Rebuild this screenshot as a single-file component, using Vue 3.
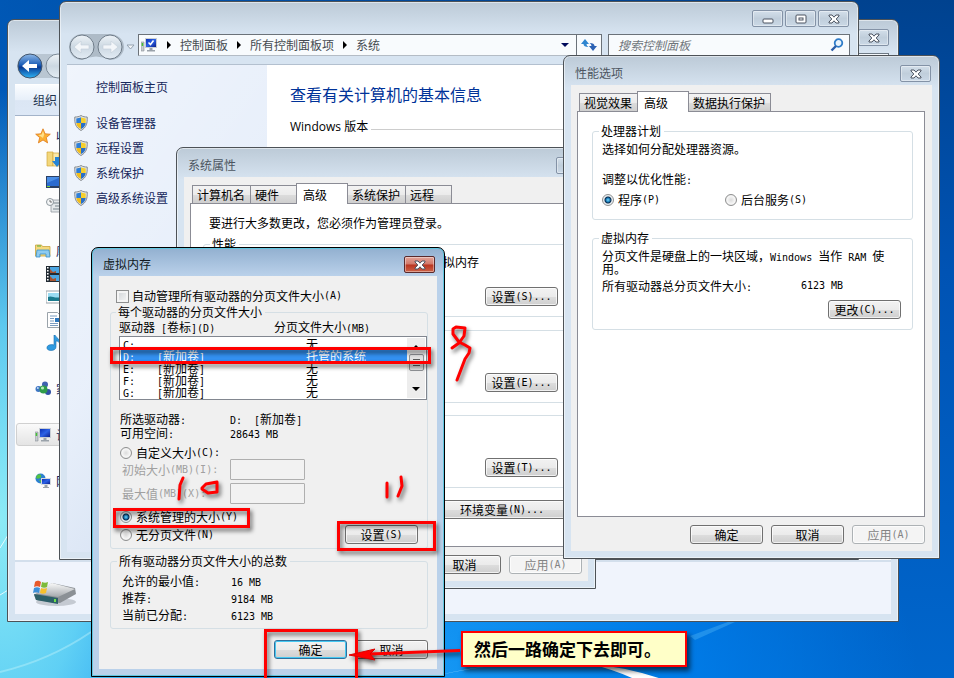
<template>
  <div class="desktop">
    <svg class="wallpaper" aria-hidden="true">
      <path d="M430 677Q520 655 600 667Q560 661 520 663Q480 666 430 677z" fill="#b9e6ff" opacity=".8" />
      <path d="M590 664Q640 668 690 690H655Q625 672 590 664z" fill="#fff" />
      <path d="M690 636L755 612L735 622L695 640z" fill="#5cc0f8" opacity=".35" />
      <path d="M0 595Q5 592 8 590M0 548Q5 540 8 535" fill="none" stroke="#fff" opacity=".8" />
      <path d="M0 672Q50 660 91 632" fill="none" stroke="#c8f6fb" stroke-width="2" opacity=".4" />
    </svg>
    <svg class="defs" width="0" height="0" aria-hidden="true">
      <defs>
        <linearGradient id="g-blue" x1="0" y1="0" x2="0" y2="1">
          <stop offset="0" stop-color="#8fb8e6" /><stop offset=".45" stop-color="#1d5fb8" />
          <stop offset=".55" stop-color="#083a94" /><stop offset="1" stop-color="#2fb4f5" />
        </linearGradient>
        <linearGradient id="g-off" x1="0" y1="0" x2="0" y2="1">
          <stop offset="0" stop-color="#eef3f7" /><stop offset=".5" stop-color="#ccd8e2" /><stop offset="1" stop-color="#e3ecf4" />
        </linearGradient>
        <linearGradient id="g-screen" x1="0" y1="0" x2="1" y2="1">
          <stop offset="0" stop-color="#0a2fb4" /><stop offset=".5" stop-color="#2c62e6" /><stop offset="1" stop-color="#0a1f8c" />
        </linearGradient>
        <linearGradient id="g-drive" x1="0" y1="0" x2="0" y2="1">
          <stop offset="0" stop-color="#fafafa" /><stop offset="1" stop-color="#a4a8ac" />
        </linearGradient>
      </defs>
      <symbol id="shield" viewBox="0 0 14 16">
        <path d="M7 .5C5 1.8 3 2 .8 2 .5 8 1.500 12.500 7 15.500 12.500 12.500 13.500 8 13.200 2 11 2 9 1.800 7 .5z" fill="#dfe3e6" stroke="#868b90" />
        <path d="M7 2.200C5.500 3 4 3.300 2.300 3.400V8H7z" fill="#2f7fd6" /><path d="M7 2.200c1.500.8 3 1.100 4.700 1.200V8H7z" fill="#f6cf2c" />
        <path d="M2.300 8c.3 2.700 1.700 4.600 4.700 6.100V8z" fill="#f2bd1a" /><path d="M11.700 8c-.3 2.700-1.700 4.600-4.700 6.100V8z" fill="#2a6fc6" />
      </symbol>
      <symbol id="computer" viewBox="0 0 16 16">
        <path d="M0 5h3v9H0z" fill="#c6cbd0" stroke="#878d93" stroke-width=".6" /><path d="M.7 6h1.500v3H.7z" fill="#45c234" />
        <path d="M4 1h12v10H4z" fill="#c9ced4" /><path d="M5 2h10v8H5z" fill="url(#g-screen)" />
        <path d="M8.500 11h3v2h2.500v1.500H6V13h2.500z" fill="#9aa2aa" />
      </symbol>
      <symbol id="star" viewBox="0 0 16 16">
        <path d="M8 .8l2.100 5 5.200.4-4 3.400 1.300 5.300L8 12l-4.600 2.900 1.300-5.300-4-3.400 5.200-.4z" fill="#fbb034" stroke="#e07b1c" stroke-width=".8" />
        <path d="M8 3l1.200 3.600L8 10 3.500 7l3.200-.6z" fill="#ffe08a" />
      </symbol>
      <symbol id="download" viewBox="0 0 16 16">
        <path d="M1 1h6v14H1z" fill="#f3d77b" stroke="#d1a63a" stroke-width=".7" /><path d="M7 2h6v13H7z" fill="#fbe9a8" stroke="#d1a63a" stroke-width=".7" />
        <path d="M9 6h4v4h3l-5 6-5-6h3z" fill="#2484d6" />
      </symbol>
      <symbol id="screen" viewBox="0 0 16 16">
        <path d="M0 2h16v12H0z" fill="#2a3f64" /><path d="M1 3h14v9H1z" fill="#2b6bd0" /><path d="M1 3h14L1 9z" fill="#4a8ee6" />
        <path d="M1 12h3v1H1z" fill="#7ad13a" />
      </symbol>
      <symbol id="recent" viewBox="0 0 16 16">
        <path d="M5 3h11v12H5z" fill="#e4e8ea" stroke="#8f989e" stroke-width=".8" /><path d="M7 6h7M9 9h6M7 12h7" stroke="#76838b" />
        <circle cx="4" cy="5" r="3.500" fill="#f4f6f7" stroke="#8f989e" /><path d="M4 3v2h2" fill="none" stroke="#555" stroke-width=".8" />
      </symbol>
      <symbol id="library" viewBox="0 0 16 16">
        <path d="M.5 2h6l1 1.500H15V13H.5z" fill="#f5d97c" stroke="#c9a33e" stroke-width=".8" /><path d="M2 3h4" stroke="#54b13e" />
        <path d="M2 7h12l1 7h-4v-3H5v3H1z" fill="#8ecbf0" stroke="#3b91c9" stroke-width=".8" />
      </symbol>
      <symbol id="video" viewBox="0 0 16 16">
        <path d="M0 0h16v16H0z" fill="#222b33" /><path d="M4 1h11v6H4zM4 9h11v6H4z" fill="#4ba6e2" /><path d="M4 3l3 3 3-1v2H4zM4 10l3 3 3-1v3H4z" fill="#a8532f" />
        <path d="M1.800 1v14" stroke="#fff" stroke-width="1.600" stroke-dasharray="1.500 1.500" />
      </symbol>
      <symbol id="picture" viewBox="0 0 16 16">
        <path d="M0 2h16v12H0z" fill="#fff" stroke="#9aa3aa" /><path d="M2 4h13v8H2z" fill="#9bdcf2" /><path d="M2 8c4-2 6 2 13 0v4H2z" fill="#1b7b8e" />
      </symbol>
      <symbol id="doc" viewBox="0 0 16 16">
        <path d="M1.500.5h10l3 3v12h-13z" fill="#fff" stroke="#9aa3aa" /><path d="M4 4h7M4 6.500h4M4 9h4M4 11.500h8M4 13.500h8" stroke="#7a9cc0" /><path d="M9 6h4v4H9z" fill="#2b77be" />
      </symbol>
      <symbol id="music" viewBox="0 0 16 16">
        <path d="M9 0c1 3 6 4 5 9-1-2-2-3-4-3v6c0 2-2 3.500-5 3.500S.5 14 1 12s4-3 7-2V0z" fill="#2f9be0" stroke="#1b6fb0" stroke-width=".6" />
      </symbol>
      <symbol id="homegroup" viewBox="0 0 16 16">
        <circle cx="3.500" cy="8" r="3" fill="#3f76c4" /><circle cx="10" cy="3.500" r="3" fill="#3f62b0" /><circle cx="13" cy="11" r="3" fill="#2f50a4" />
        <circle cx="8.500" cy="8.500" r="4" fill="#2f9c4a" /><circle cx="7.500" cy="7" r="1.600" fill="#b4ecb8" /><circle cx="2.800" cy="7" r="1" fill="#c6dcf6" />
      </symbol>
      <symbol id="network" viewBox="0 0 16 16">
        <circle cx="5.500" cy="5.500" r="5" fill="#2c7fd0" /><path d="M2 2c3-2 5 0 4 2S2 6 1 5zM4 7c3 0 4 1 2 3z" fill="#53c244" />
        <path d="M6 5h10v7H6z" fill="#d4d9de" /><path d="M7 6h8v5H7z" fill="url(#g-screen)" /><path d="M9.500 12h3v2H14v1H8v-1h1.500z" fill="#9aa2aa" />
      </symbol>
      <symbol id="cross" viewBox="0 0 12 10">
        <path d="M1 1h3l2 2.200L8 1h3v1L8.200 5 11 8v1H8L6 6.800 4 9H1V8l2.800-3L1 2z" fill="#fff" stroke="#4b5360" stroke-linejoin="round" />
      </symbol>
    </svg>

    <!-- explorer -->
    <section class="win explorer">
      <header class="explorer-top">
        <div class="caption"><button class="cap" aria-label="关闭"><svg width="12" height="10"><use href="#cross" /></svg></button></div>
      </header>
      <div class="explorer-nav">
        <svg width="58" height="28">
          <rect x="1" y="1" width="56" height="24" rx="12" fill="#b9c6d2" />
          <circle cx="14" cy="13" r="12" fill="url(#g-blue)" stroke="#42566e" />
          <path d="M6 13l7-6v4h8v4h-8v4z" fill="#fff" />
          <circle cx="42" cy="13" r="12" fill="url(#g-off)" stroke="#7c8a98" />
        </svg>
        <span class="explorer-search"></span>
      </div>
      <div class="toolbar">组织</div>
      <nav class="tree">
        <ul v-for="(g, i) in tree" :key="i">
          <li v-for="n in g" :key="n.icon" :class="{ child: n.child, current: n.current }">
            <svg width="16" height="16"><use :href="'#' + n.icon" /></svg><span>{{ n.label }}</span>
          </li>
        </ul>
      </nav>
      <footer class="details">
        <svg width="46" height="28" viewBox="0 0 46 28">
          <ellipse cx="24" cy="23" rx="20" ry="4" fill="#c5cad2" />
          <path d="M2 16L20 4l23 5 1 6-16 9-24-3z" fill="#8b9095" />
          <path d="M2 14L20 4l23 6-17 8z" fill="url(#g-drive)" />
          <path d="M2 15l24 4v6L4 21z" fill="#2d5f68" /><path d="M22 20h2v3h-2z" fill="#6ee04a" />
          <path d="M3 3c3-2 4-1 6 0l-1 5c-2-1-4-1-6 0z" fill="#e8592b" /><path d="M10 3c2 1 4 1 6 0l-1 5c-2 1-4 1-6 0z" fill="#7dbb3a" />
          <path d="M2 9c2-1 4-1 6 0l-1 5c-2-1-4-1-6 0z" fill="#3c8fd8" /><path d="M9 9c2 1 4 1 6 0l-1 5c-2 1-4 1-6 0z" fill="#f6c02c" />
        </svg>
      </footer>
    </section>

    <!-- control panel -->
    <section class="win panel">
      <header class="panel-top">
        <div class="caption">
          <button class="cap" aria-label="最小化"><svg width="12" height="10"><rect x="1" y="5" width="10" height="4" rx="1" fill="#fff" stroke="#4b5360" /></svg></button>
          <button class="cap" aria-label="最大化"><svg width="12" height="10"><rect x="1" y="1" width="10" height="8" rx="1" fill="#fff" stroke="#4b5360" /><rect x="4" y="4" width="4" height="2" fill="#fff" stroke="#4b5360" /></svg></button>
          <button class="cap" aria-label="关闭"><svg width="12" height="10"><use href="#cross" /></svg></button>
        </div>
      </header>
      <div class="panel-nav">
        <svg class="arrows" width="70" height="28">
          <path d="M15 0h28a14 13 0 0 1 0 26q-14-7-28 0a13 13 0 0 1 0-26z" fill="#aebbc7" />
          <g fill="url(#g-off)" stroke="#6f7c89"><circle cx="15" cy="13" r="12" /><circle cx="43" cy="13" r="12" /></g>
          <path d="M7 13l7-6v4h8v4h-8v4zM51 13l-7-6v4h-8v4h8v4z" fill="#f3f6f9" stroke="#c3ced8" stroke-width=".6" />
          <path d="M60 11h7l-3.500 4z" fill="#f5f8fb" stroke="#93a1af" />
        </svg>
        <div class="address">
          <svg width="16" height="16"><use href="#computer" /><path d="M7.500 5.500l2 2 3-4" fill="none" stroke="#fff" stroke-width="1.500" /></svg>
          <template v-for="c in crumbs" :key="c">
            <svg class="sep" width="4" height="8"><path d="M0 0l4 4-4 4z" /></svg>
            <a href="#">{{ c }}</a>
          </template>
          <svg class="drop" width="8" height="4"><path d="M0 0h8L4 4z" fill="#000a5c" /></svg>
          <button class="refresh" aria-label="刷新">
            <svg width="16" height="14"><path d="M0 6l4-5 4 5H5.500q0 2 2 3Q2.500 9 2.500 6z" fill="#2f86d0" /><path d="M16 8l-4 5-4-5h2.500q0-2-2-3 5 0 5 3z" fill="#2b62b4" /></svg>
          </button>
        </div>
        <div class="search">
          <input type="text" placeholder="搜索控制面板" aria-label="搜索控制面板" />
          <svg width="14" height="14"><circle cx="8.500" cy="5" r="3.800" fill="#eaf4fc" stroke="#2f7cc8" stroke-width="1.800" /><path d="M6 8l-4.500 4.500" stroke="#2b5ea8" stroke-width="2.400" /></svg>
        </div>
      </div>
      <div class="panel-body">
        <aside>
          <a class="home" href="#">控制面板主页</a>
          <a v-for="t in tasks" :key="t" class="task" href="#"><svg width="14" height="16"><use href="#shield" /></svg>{{ t }}</a>
        </aside>
        <main>
          <h1>查看有关计算机的基本信息</h1>
          <h2>Windows 版本</h2>
        </main>
      </div>
    </section>

    <!-- system properties -->
    <section class="win dialog system">
      <header class="title">
        <span>系统属性</span>
        <button class="cap" aria-label="关闭"><svg width="12" height="10"><use href="#cross" /></svg></button>
      </header>
      <div class="client">
        <div class="tabs">
          <button>计算机名</button><button class="wide">硬件</button><button class="on">高级</button><button>系统保护</button><button class="wide">远程</button>
        </div>
        <div class="page">
          <p class="note">要进行大多数更改，您必须作为管理员登录。</p>
          <fieldset class="perf">
            <legend>性能</legend>
            <p>视觉效果，处理器计划，内存使用，以及虚拟内存</p>
            <button class="btn">设置<i>(S)...</i></button>
          </fieldset>
          <fieldset class="bare"><button class="btn">设置<i>(E)...</i></button></fieldset>
          <fieldset class="bare"><button class="btn">设置<i>(T)...</i></button></fieldset>
          <button class="btn env">环境变量<i>(N)...</i></button>
        </div>
        <div class="actions">
          <button class="btn">取消</button>
          <button class="btn" disabled>应用<i>(A)</i></button>
        </div>
      </div>
    </section>

    <!-- performance options -->
    <section class="win dialog options">
      <header class="title">
        <span>性能选项</span>
        <button class="cap" aria-label="关闭"><svg width="12" height="10"><use href="#cross" /></svg></button>
      </header>
      <div class="client">
        <div class="tabs">
          <button>视觉效果</button><button class="on">高级</button><button>数据执行保护</button>
        </div>
        <div class="page">
          <fieldset class="sched">
            <legend>处理器计划</legend>
            <p>选择如何分配处理器资源。</p>
            <p class="adjust">调整以优化性能<i>:</i></p>
            <div class="radios">
              <label><input v-model="schedule" type="radio" value="P" />程序<i>(P)</i></label>
              <label><input v-model="schedule" type="radio" value="S" />后台服务<i>(S)</i></label>
            </div>
          </fieldset>
          <fieldset class="vmem">
            <legend>虚拟内存</legend>
            <p class="explain">分页文件是硬盘上的一块区域，<i>Windows </i>当作<i> RAM </i>使<br />用。</p>
            <p class="total"><span>所有驱动器总分页文件大小<i>:</i></span><i>6123 MB</i></p>
            <button class="btn">更改<i>(C)...</i></button>
          </fieldset>
        </div>
        <div class="actions">
          <button class="btn">确定</button>
          <button class="btn">取消</button>
          <button class="btn" disabled>应用<i>(A)</i></button>
        </div>
      </div>
    </section>

    <!-- virtual memory -->
    <section class="win dialog memory">
      <header class="title">
        <span>虚拟内存</span>
        <button class="cap red" aria-label="关闭"><svg width="12" height="10"><use href="#cross" /></svg></button>
      </header>
      <div class="client">
        <label class="auto"><input v-model="auto" type="checkbox" />自动管理所有驱动器的分页文件大小<i>(A)</i></label>
        <fieldset class="drives">
          <legend>每个驱动器的分页文件大小</legend>
          <div class="heads"><span>驱动器<i> [</i>卷标<i>](D)</i></span><span>分页文件大小<i>(MB)</i></span></div>
          <div class="list">
            <table>
              <tbody>
                <tr v-for="d in drives" :key="d.id" :class="{ sel: d.id === picked }" @click="picked = d.id">
                  <td><i>{{ d.id }}:</i></td>
                  <td><template v-if="d.label"><i>[</i>{{ d.label }}<i>]</i></template></td>
                  <td>{{ d.size }}</td>
                </tr>
              </tbody>
            </table>
            <div class="scroll">
              <svg width="8" height="4"><path d="M0 4l4-4 4 4z" /></svg>
              <span class="thumb"></span>
              <svg width="8" height="4"><path d="M0 0h8L4 4z" /></svg>
            </div>
          </div>
          <dl class="info">
            <dt>所选驱动器<i>:</i></dt><dd><i>D:&nbsp; [</i>新加卷<i>]</i></dd>
            <dt>可用空间<i>:</i></dt><dd><i>28643 MB</i></dd>
          </dl>
          <label class="custom"><input v-model="mode" type="radio" value="C" />自定义大小<i>(C):</i></label>
          <div class="size"><label for="min">初始大小<i>(MB)(I):</i></label><input id="min" type="text" disabled /></div>
          <div class="size"><label for="max">最大值<i>(MB)(X):</i></label><input id="max" type="text" disabled /></div>
          <div class="modes">
            <div>
              <label><input v-model="mode" type="radio" value="Y" />系统管理的大小<i>(Y)</i></label>
              <label><input v-model="mode" type="radio" value="N" />无分页文件<i>(N)</i></label>
            </div>
            <button class="btn">设置<i>(S)</i></button>
          </div>
        </fieldset>
        <fieldset class="totals">
          <legend>所有驱动器分页文件大小的总数</legend>
          <dl>
            <template v-for="t in totals" :key="t[0]"><dt>{{ t[0] }}<i>:</i></dt><dd><i>{{ t[1] }}</i></dd></template>
          </dl>
        </fieldset>
        <div class="actions">
          <button class="btn default">确定</button>
          <button class="btn">取消</button>
        </div>
      </div>
    </section>

    <svg class="marks" aria-hidden="true">
      <g fill="none" stroke="#f00" stroke-width="3">
        <rect x="111.500" y="348.500" width="318" height="14" />
        <rect x="114.500" y="509.500" width="134" height="17" />
        <rect x="338.500" y="522.500" width="96" height="27" />
        <rect x="265.500" y="630.500" width="91" height="60" />
      </g>
      <g fill="none" stroke="#f00" stroke-width="3" stroke-linecap="round" stroke-linejoin="round">
        <path d="M452 348l7-5 5-7 1-8-9-1-3 2v5l6 8 6 3 5 3-1 5-4 6-8 21" />
        <path d="M183 478l-3 7-1 14" /><path d="M202 488l4-4 11-2v10l-9 1-6-4z" />
        <path d="M387 483v14M401 477l1 9-4 10" />
      </g>
      <path d="M460 650.500L370 654" stroke="#f00" stroke-width="3" />
      <path d="M349 655l26-6-5 5 5 6z" fill="#f00" stroke="#d00" />
    </svg>
    <div class="callout">然后一路确定下去即可。</div>
  </div>
</template>

<script setup>
import { ref } from 'vue'

const schedule = ref('P')
const auto = ref(false)
const mode = ref('Y')
const picked = ref('D')

const crumbs = ['控制面板', '所有控制面板项', '系统']
const tasks = ['设备管理器', '远程设置', '系统保护', '高级系统设置']
const tree = [
  [
    { icon: 'star', label: '收藏夹' },
    { icon: 'download', label: '下载', child: true },
    { icon: 'screen', label: '桌面', child: true },
    { icon: 'recent', label: '最近访问的位置', child: true },
  ],
  [
    { icon: 'library', label: '库' },
    { icon: 'video', label: '视频', child: true },
    { icon: 'picture', label: '图片', child: true },
    { icon: 'doc', label: '文档', child: true },
    { icon: 'music', label: '音乐', child: true },
  ],
  [{ icon: 'homegroup', label: '家庭组' }],
  [{ icon: 'computer', label: '计算机', current: true }],
  [{ icon: 'network', label: '网络' }],
]
const drives = [
  { id: 'C', label: '', size: '无' },
  { id: 'D', label: '新加卷', size: '托管的系统' },
  { id: 'E', label: '新加卷', size: '无' },
  { id: 'F', label: '新加卷', size: '无' },
  { id: 'G', label: '新加卷', size: '无' },
]
const totals = [
  ['允许的最小值', '16 MB'],
  ['推荐', '9184 MB'],
  ['当前已分配', '6123 MB'],
]
</script>

<style>
body{margin:0;overflow:hidden}
</style>

<style scoped>
*{box-sizing:border-box}
.desktop{position:relative;height:100vh;overflow:hidden;font:12px/14px "Noto Sans CJK SC",sans-serif;color:#000;
  background:
    radial-gradient(ellipse 200px 430px at 0 520px,#8cebf6 0,rgba(110,220,246,.85) 45%,rgba(50,170,236,0) 100%),
    radial-gradient(ellipse 620px 420px at 300px 700px,#22a8fa 0,rgba(0,130,240,.8) 60%,rgba(0,110,220,0) 100%),
    linear-gradient(90deg,rgba(0,96,196,.7),rgba(0,60,140,0) 60%),
    linear-gradient(180deg,#00428f 0,#0053b4 40%,#0066cc 100%)}
.wallpaper{position:absolute;inset:0;width:100%;height:100%}
.defs{position:absolute}
svg{display:block;flex:none}
p,h1,h2,dl,dd,ul{margin:0;padding:0}
i{font:10px/1 "DejaVu Sans Mono",monospace;white-space:pre}
button,input{font:inherit;color:inherit;margin:0;padding:0}
a{color:inherit;text-decoration:none}
label{display:flex;align-items:center;white-space:nowrap}

/* windows */
.win{position:absolute;display:flex;flex-direction:column;padding:0 7px 7px;border:1px solid #4d5257;border-radius:7px 7px 0 0;background:linear-gradient(#bccad7 0,#d7e4f1 32px,#d7e4f1);box-shadow:inset 0 0 0 1px rgba(255,255,255,.5)}
.caption{display:flex;gap:2px;justify-content:flex-end}
.cap{width:31px;height:17px;display:flex;align-items:center;justify-content:center;border:1px solid #8392a6;border-radius:2px;background:linear-gradient(#d3dfea,#c0cedb 50%,#cad8e6);box-shadow:inset 0 0 0 1px rgba(255,255,255,.4)}
.cap.red{border-color:#5a2a2c;background:linear-gradient(#e3a398,#d17869 48%,#b93420 52%,#cc6248)}

.explorer{left:7px;top:19px;width:892px;height:603px}
.explorer-top{height:33px;padding:9px 2px 0}
.explorer-nav{height:31px;display:flex;padding-left:1px}
.explorer-search{flex:1;margin:0 2px 0 400px;height:22px;border:1px solid #6d7883;background:#f4f8fc}
.toolbar{height:32px;padding-left:18px;line-height:30px;color:#1e3450;border-top:1px solid #fff;border-bottom:1px solid #a3b3c9;background:linear-gradient(#fbfdff,#e7eff9 50%,#dbe6f4 52%,#dde8f6)}
.tree{flex:1;background:#fdfdfd;padding-top:8px;display:flex;flex-direction:column;gap:23px}
.tree ul{width:56px;overflow:hidden;list-style:none}
.tree li{height:23px;display:flex;align-items:center;gap:5px;padding-left:19px;border:1px solid transparent;color:#10205a;white-space:nowrap}
.tree li.child{padding-left:30px}
.tree li.current{margin-left:1px;padding-left:18px;border-color:#d0d0d0;border-radius:3px;background:linear-gradient(#fafafa,#e4e4e4)}
.details{height:54px;padding:17px 0 0 17px;background:#f0f4fc;border-top:2px solid #d3dfec}

.panel{left:59px;top:1px;width:800px;height:559px}
.panel-top{height:32px;padding:8px 2px 0}
.panel-nav{height:31px;display:flex;align-items:flex-start;padding-right:1px;border-bottom:1px solid #b3c0cf}
.arrows{margin-right:1px}
.address{flex:1;height:22px;display:flex;align-items:center;gap:9px;padding-left:2px;border:1px solid #6b7279;border-bottom-color:#b4bcc5;background:#f8fbfd;color:#454b51}
.address svg:first-child{margin-right:1px}
.address .drop{margin-left:auto}
.refresh{align-self:stretch;width:25px;margin-left:-2px;display:flex;align-items:center;justify-content:center;border:0;border-left:1px solid #6b7279;background:none}
.search{width:242px;height:22px;margin-left:6px;display:flex;align-items:center;padding:0 5px 0 9px;border:1px solid #6b7279;border-bottom-color:#b4bcc5;background:#f8fbfd}
.search input{flex:1;min-width:0;border:0;background:none;font-style:italic}
.search input::placeholder{color:#6f757b;opacity:1}
.panel-body{flex:1;display:flex}
aside{width:200px;padding:10px 7px;color:#15265a;background:linear-gradient(125deg,rgba(255,255,255,.4) 0,rgba(255,255,255,.1) 45%,rgba(190,208,232,.35) 75%,rgba(255,255,255,.1)),#e6eefa}
aside a{display:flex;align-items:center}
.home{height:24px;padding-left:22px;margin-bottom:11px}
.task{height:25px;gap:8px}
main{flex:1;padding:17px 0 0 23px;background:#fff}
h1{font-size:16px;line-height:24px;font-weight:400;color:#003399}
h2{margin-top:13px;display:flex;align-items:center;gap:3px;font:12px/16px "Open Sans","Noto Sans CJK SC",sans-serif}
h2::after{content:"";flex:1;border-top:1px solid #cdcdcd;margin-top:4px}

/* dialogs */
.title{display:flex;justify-content:space-between;height:29px;padding:9px 1px 0 4px;color:#4c5560;line-height:16px}
.client{flex:1;padding:6px 6px 0;background:#f0f0f0}
.tabs{height:20px;padding-left:2px;display:flex;align-items:flex-end}
.tabs button{height:18px;padding:0 5px 0 4px;border:1px solid #8b8c95;border-bottom:0;background:linear-gradient(#f3f3f3,#ebebeb 50%,#dcdcdc 52%,#cfcfcf);line-height:17px;text-align:left}
.tabs button + button{margin-left:-1px}
.tabs .wide{width:47px}
.tabs .on{position:relative;width:52px;height:21px;margin-bottom:-1px;padding-left:6px;background:#fff}
.page{border:1px solid #8b8c95;background:#fff}
.actions{display:flex;justify-content:flex-end;gap:8px;margin-top:8px}
.btn{display:flex;align-items:center;justify-content:center;width:73px;height:19px;border:1px solid #707070;border-radius:3px;background:linear-gradient(#f2f2f2,#ebebeb 50%,#dddddd 52%,#cfcfcf);box-shadow:inset 0 0 0 1px rgba(255,255,255,.7)}
.btn:disabled{color:#838383;border-color:#adb2b5;background:#f4f4f4}
.btn.default{border-color:#2f6f9c;box-shadow:inset 0 0 0 1px #45c8f2}
fieldset{min-width:0;margin:0;border:1px solid #d5dfe5;border-radius:3px;padding:0 0 0 9px}
legend{margin-left:-3px;padding:0 3px 0 2px;height:14px;line-height:14px}
input[type=radio]{appearance:none;width:12px;height:12px;margin-right:4px;border:1px solid #8e8f8f;border-radius:50%;background:radial-gradient(#dcdcdc 0,#f6f6f6 4px,#e2e2e2 6px)}
input[type=radio]:checked{background:radial-gradient(circle at 50% 50%,#7fdcff 0,#1478b4 2px,#0b2a4a 3px,#e9eef2 4px)}
input[type=checkbox]{appearance:none;width:13px;height:13px;margin-right:3px;border:1px solid #8e8f8f;background:linear-gradient(135deg,#cfd3d6,#f7f7f7);box-shadow:inset 0 0 0 2px #f4f4f4}

.system{left:176px;top:147px;width:420px;height:442px}
.system .page{height:344px;padding:12px 9px 0 12px}
.system .note{padding-left:6px}
.system fieldset{display:flow-root;padding-right:13px;padding-bottom:10px}
.perf{margin-top:7px}
.perf p{padding:4px 0 0 2px;white-space:nowrap}
.system fieldset .btn{margin-left:auto}
.perf .btn{margin-top:18px}
.system .bare{margin-top:13px;padding-top:42px}
.system .bare + .bare{margin-top:12px}
.env{width:140px;margin:12px 0 0 auto}

.options{left:563px;top:55px;width:377px;height:504px}
.options .client{padding-right:7px}
.options .page{height:406px;padding:12px 11px 0 14px}
.sched{padding-top:4px;padding-bottom:12px}
.adjust{margin-top:16px}
.radios{display:grid;grid-template-columns:123px 1fr;margin-top:7px}
.vmem{margin-top:11px;padding-top:5px;padding-bottom:10px}
.explain{line-height:12px;white-space:nowrap}
.total{display:grid;grid-template-columns:199px 1fr;align-items:center;margin-top:4px}
.vmem .btn{margin:7px 11px 0 auto}

.memory{left:91px;top:247px;width:354px;height:430px;border-color:#000;background:linear-gradient(#92b0d0 0,#bad1ea 28px,#bad1ea);box-shadow:inset 0 0 0 1px #5fc6e0}
.memory .title{height:28px;padding:8px 2px 0 4px;color:#101820}
.memory .client{padding:13px 9px 0 11px}
.auto{height:14px;margin-left:6px}
.drives{margin-top:2px;padding:1px 0 4px 8px}
.heads{display:grid;grid-template-columns:155px 1fr}
.list{height:64px;margin-top:2px;padding:1px;display:flex;border:1px solid #828790;background:#fff}
table,tbody{display:block;flex:1}
tr{display:grid;grid-template-columns:34px 149px 1fr;height:12px;padding-left:2px}
td{display:block;padding:0;line-height:12px;white-space:nowrap}
.list tr.sel{background:#3390f0;color:#fff}
.scroll{width:18px;display:flex;flex-direction:column;align-items:center;justify-content:space-between;padding:7px 1px;background:#ededed}
.thumb{width:15px;height:17px;margin-bottom:12px;border:1px solid #8f9296;border-radius:2px;background:repeating-linear-gradient(#5a5a5a 0 1px,#e6e6e6 1px 3px) center/7px 7px no-repeat,#e2e2e2}
.info{display:grid;grid-template-columns:110px 1fr;margin:12px 0 7px 1px}
.custom{height:12px}
.drives > label,.modes label{padding-left:1px}
.size{display:grid;grid-template-columns:108px 75px;align-items:center;margin:0 0 3px 3px;color:#a0a0a0}
.size input{height:21px;border:1px solid #afafaf;border-radius:1px;background:#f2f2f2}
.modes{display:flex;justify-content:space-between;align-items:flex-end;height:34px;margin-top:6px;padding-right:9px}
.modes > div{align-self:flex-start;display:grid;gap:4px}
.totals{margin-top:5px;padding:4px 0 5px 11px}
.totals legend{margin-left:-5px}
.totals dl{display:grid;grid-template-columns:109px 1fr;line-height:17px}
.memory .actions{margin-top:11px}

/* red annotations */
.marks{position:absolute;inset:0;width:100%;height:100%;pointer-events:none;filter:drop-shadow(2px 3px 2px rgba(0,0,0,.6))}
.callout{position:absolute;left:461px;top:631px;width:226px;padding:0 11px;border:2px solid #f00;background:#ffffc8;box-shadow:3px 4px 5px rgba(0,0,0,.6);font-size:17px;line-height:32px;font-weight:700;white-space:nowrap}
</style>
